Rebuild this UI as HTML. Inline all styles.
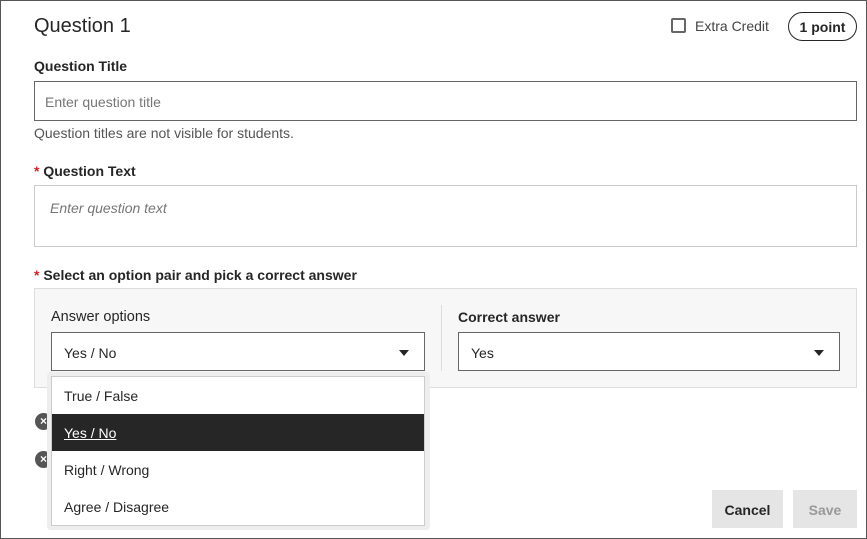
<!DOCTYPE html>
<html><head><meta charset="utf-8"><style>
*{box-sizing:border-box;margin:0;padding:0}
body{width:867px;height:539px;background:#fff;font-family:"Liberation Sans",sans-serif;color:#262626;position:relative;overflow:hidden}
.frame{position:absolute;left:0;top:0;width:867px;height:539px;border:1px solid #555}
.a{position:absolute}
.lbl{font-size:14px;font-weight:bold;color:#262626}
.inp{position:absolute;border:1px solid #666;background:#fff}
.ph{color:#767676;font-size:14px}
.req{color:#c62828}
.opt{position:absolute;left:0;width:372px;height:37px;line-height:39px;padding-left:12px;font-size:14px}
.tri{position:absolute;width:0;height:0;border-left:5px solid transparent;border-right:5px solid transparent;border-top:6px solid #262626}
.x{position:absolute;width:17px;height:17px;border-radius:50%;background:#555;color:#fff;font-size:12px;font-weight:bold;text-align:center;line-height:17px}
</style></head><body>
<div class="frame"></div>
<div class="a" style="left:34px;top:15px;font-size:20px;color:#262626">Question 1</div>
<div class="a" style="left:671px;top:18px;width:15px;height:15px;border:2px solid #666;border-radius:2px"></div>
<div class="a" style="left:695px;top:18px;font-size:14px;color:#444">Extra Credit</div>
<div class="a" style="left:788px;top:12px;width:69px;height:29px;border:1px solid #262626;border-radius:15px;font-size:14px;font-weight:bold;text-align:center;line-height:28px">1 point</div>

<div class="a lbl" style="left:34px;top:58px">Question Title</div>
<div class="inp" style="left:34px;top:81px;width:823px;height:40px"><span class="ph a" style="left:10px;top:12px">Enter question title</span></div>
<div class="a" style="left:34px;top:125px;font-size:14px;color:#555">Question titles are not visible for students.</div>

<div class="a lbl" style="left:34px;top:163px"><span class="req">*</span> Question Text</div>
<div class="a" style="left:34px;top:185px;width:823px;height:62px;border:1px solid #ccc"><span class="ph a" style="left:15px;top:14px;font-style:italic">Enter question text</span></div>

<div class="a lbl" style="left:34px;top:267px"><span class="req">*</span> Select an option pair and pick a correct answer</div>
<div class="a" style="left:34px;top:288px;width:823px;height:100px;background:#f7f7f7;border:1px solid #ddd"></div>
<div class="a" style="left:51px;top:309px;font-size:14.5px">Answer options</div>
<div class="inp" style="left:51px;top:332px;width:374px;height:39px"><span class="a" style="left:12px;top:12px;font-size:14px">Yes / No</span><div class="tri" style="left:347px;top:17px"></div></div>
<div class="a" style="left:441px;top:305px;width:1px;height:66px;background:#ddd"></div>
<div class="a lbl" style="left:458px;top:309px">Correct answer</div>
<div class="inp" style="left:458px;top:332px;width:382px;height:39px"><span class="a" style="left:12px;top:12px;font-size:14px">Yes</span><div class="tri" style="left:355px;top:17px"></div></div>

<div class="x" style="left:35px;top:413px">×</div>
<div class="x" style="left:35px;top:451px">×</div>

<div class="a" style="left:47px;top:372px;width:383px;height:158px;background:#eee;border-radius:4px"></div>
<div class="a" style="left:51px;top:376px;width:374px;height:150px;background:#fff;border:1px solid #ccc">
<div class="opt" style="top:0">True / False</div>
<div class="opt" style="top:37px;background:#262626;color:#fff;text-decoration:underline">Yes / No</div>
<div class="opt" style="top:74px">Right / Wrong</div>
<div class="opt" style="top:111px">Agree / Disagree</div>
</div>

<div class="a" style="left:712px;top:490px;width:71px;height:38px;background:#e5e5e5;font-size:14px;font-weight:bold;text-align:center;line-height:40px">Cancel</div>
<div class="a" style="left:793px;top:490px;width:64px;height:38px;background:#e5e5e5;color:#999;font-size:14px;font-weight:bold;text-align:center;line-height:40px">Save</div>
</body></html>
